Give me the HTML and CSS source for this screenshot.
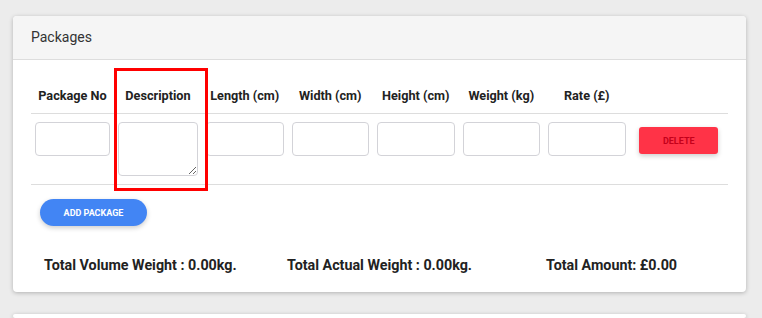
FILE: index.html
```html
<!DOCTYPE html>
<html lang="en">
<head>
    <meta charset="UTF-8">
    <meta name="viewport" content="width=device-width, initial-scale=1.0">
    <title>Packages</title>
    <link rel="stylesheet" href="styles.css">
</head>
<body>
    <div class="card">
        <div class="card-header">Packages</div>
        <div class="card-body">
            <table class="packages">
                <colgroup>
                    <col class="c-no">
                    <col class="c-desc">
                    <col class="c-num">
                    <col class="c-num">
                    <col class="c-num">
                    <col class="c-num">
                    <col class="c-num">
                    <col>
                </colgroup>
                <thead>
                    <tr>
                        <th>Package No</th>
                        <th>Description</th>
                        <th>Length (cm)</th>
                        <th>Width (cm)</th>
                        <th>Height (cm)</th>
                        <th>Weight (kg)</th>
                        <th>Rate (£)</th>
                        <th></th>
                    </tr>
                </thead>
                <tbody>
                    <tr>
                        <td><input type="text"></td>
                        <td><textarea></textarea></td>
                        <td><input type="text"></td>
                        <td><input type="text"></td>
                        <td><input type="text"></td>
                        <td><input type="text"></td>
                        <td><input type="text"></td>
                        <td><button class="btn-delete">Delete</button></td>
                    </tr>
                </tbody>
            </table>
            <button class="btn-add">Add Package</button>
            <div class="totals">
                <span>Total Volume Weight : 0.00kg.</span>
                <span>Total Actual Weight : 0.00kg.</span>
                <span>Total Amount: £0.00</span>
            </div>
        </div>
    </div>
    <div class="card next"></div>

    <div class="highlight"></div>
</body>
</html>
```

FILE: styles.css
```css
body {
    font-family: Roboto, "Liberation Sans", sans-serif;
    margin: 0;
    padding: 16px 16px 0 13px;
    background: #ececec;
    color: #212121;
    height: 318px;
    box-sizing: border-box;
    overflow: hidden;
}
.card {
    background: white;
    border-radius: 4px;
    box-shadow: 0 1px 4px rgba(0, 0, 0, 0.25);
    overflow: hidden;
}
.card.next {
    margin-top: 22px;
    height: 4px;
}
.card-header {
    background: #f5f5f5;
    border-bottom: 1px solid #ddd;
    padding: 0 18px;
    height: 43px;
    line-height: 43px;
    font-size: 14px;
    color: #333;
}
.card-body {
    padding: 18px 18px 17px;
}
.packages {
    width: 100%;
    border-collapse: collapse;
    table-layout: fixed;
}
.c-no {
    width: 83px;
}
.c-desc {
    width: 88px;
}
.c-num {
    width: 85.5px;
}
.packages th {
    font-size: 12.7px;
    font-weight: bold;
    height: 35px;
    padding: 0 2px;
    text-align: center;
    border-bottom: 1px solid #ddd;
    color: #222;
    white-space: nowrap;
}
.packages td {
    padding: 8px 4px;
    vertical-align: top;
    text-align: center;
    border-bottom: 1px solid #ddd;
}
input, textarea {
    width: 100%;
    box-sizing: border-box;
    border: 1px solid #d3d3d8;
    border-radius: 4px;
    height: 34px;
    display: block;
    font-family: inherit;
    margin: 0;
}
textarea {
    height: 54px;
    resize: vertical;
}
.btn-delete {
    margin-top: 5px;
    width: 79px;
    height: 27px;
    border: none;
    border-radius: 3px;
    background: #ff3347;
    color: #c4001b;
    font-family: inherit;
    font-size: 9px;
    font-weight: bold;
    text-transform: uppercase;
    box-shadow: 0 2px 5px rgba(0, 0, 0, 0.2);
}
.btn-add {
    display: block;
    margin: 14px 0 0 9px;
    width: 107px;
    height: 27px;
    border: none;
    border-radius: 14px;
    background: #4285f4;
    color: white;
    font-family: inherit;
    font-size: 9px;
    font-weight: bold;
    text-transform: uppercase;
    box-shadow: 0 2px 5px rgba(0, 0, 0, 0.2);
}
.totals {
    display: grid;
    grid-template-columns: 243px 259px 1fr;
    padding: 29px 0 0 13px;
    font-size: 14.3px;
    font-weight: bold;
    line-height: 20px;
    color: #222;
}
.highlight {
    position: absolute;
    left: 114px;
    top: 68px;
    width: 88px;
    height: 117px;
    border: 3px solid #f00;
}
```
